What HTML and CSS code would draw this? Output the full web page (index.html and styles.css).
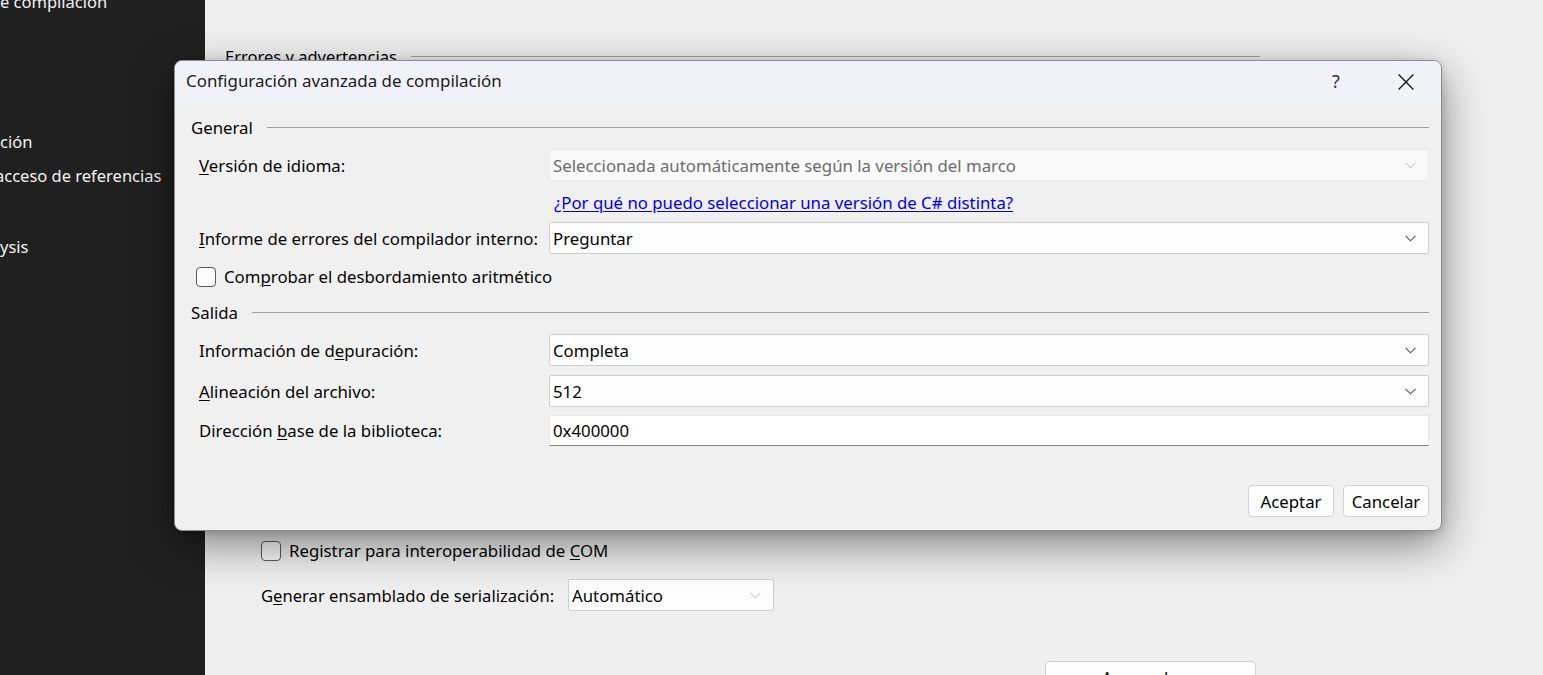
FILE: index.html
```html
<!DOCTYPE html>
<html lang="es">
<head>
<meta charset="utf-8">
<title>Configuración avanzada de compilación</title>
<link rel="stylesheet" href="styles.css">
</head>
<body>
<div class="app">
  <nav class="sidebar">
    <div class="nav-item nav-first">e compilación</div>
    <div class="nav-item nav-config">ción</div>
    <div class="nav-item nav-paths">acceso de referencias</div>
    <div class="nav-item nav-analysis">ysis</div>
  </nav>
  <main class="content">
    <div class="group-header page-group">
      <span class="group-title">Errores y advertencias</span>
      <span class="rule"></span>
    </div>
    <div class="page-rows">
      <div class="check-row page-check">
        <span class="checkbox"></span>
        <span>Registrar para interoperabilidad de <u>C</u>OM</span>
      </div>
      <div class="page-field">
        <span class="page-label">G<u>e</u>nerar ensamblado de serialización:</span>
        <div class="select page-select">
          <span>Automático</span>
          <svg class="chev light" width="11" height="7" viewBox="0 0 11 7"><polyline points="0.5,0.8 5.5,5.8 10.5,0.8" fill="none" stroke="currentColor" stroke-width="1"/></svg>
        </div>
      </div>
      <div class="page-actions">
        <button class="btn wide">Avanzadas...</button>
      </div>
    </div>
  </main>
</div>

<div class="dialog">
  <div class="titlebar">
    <span class="title">Configuración avanzada de compilación</span>
    <div class="title-controls">
      <span class="tb-btn help">?</span>
      <span class="tb-btn close">
        <svg width="16" height="16" viewBox="0 0 16 16"><path d="M0.6 0.6 L15.4 15.4 M15.4 0.6 L0.6 15.4" stroke="#1b1b1b" stroke-width="1.4" fill="none"/></svg>
      </span>
    </div>
  </div>
  <div class="dialog-body">
    <div class="group-header">
      <span class="group-title">General</span>
      <span class="rule"></span>
    </div>
    <div class="form-row row-lang">
      <span class="label"><u>V</u>ersión de idioma:</span>
      <div class="select disabled">
        <span>Seleccionada automáticamente según la versión del marco</span>
        <svg class="chev light" width="11" height="7" viewBox="0 0 11 7"><polyline points="0.5,0.8 5.5,5.8 10.5,0.8" fill="none" stroke="currentColor" stroke-width="1"/></svg>
      </div>
    </div>
    <div class="link-row">
      <a class="link" href="#">¿Por qué no puedo seleccionar una versión de C# distinta?</a>
    </div>
    <div class="form-row row-report">
      <span class="label"><u>I</u>nforme de errores del compilador interno:</span>
      <div class="select">
        <span>Preguntar</span>
        <svg class="chev" width="11" height="7" viewBox="0 0 11 7"><polyline points="0.5,0.8 5.5,5.8 10.5,0.8" fill="none" stroke="currentColor" stroke-width="1.1"/></svg>
      </div>
    </div>
    <div class="check-row dialog-check">
      <span class="checkbox"></span>
      <span>Com<u>p</u>robar el desbordamiento aritmético</span>
    </div>
    <div class="group-header group-out">
      <span class="group-title">Salida</span>
      <span class="rule"></span>
    </div>
    <div class="form-row row-debug">
      <span class="label">Información de d<u>e</u>puración:</span>
      <div class="select">
        <span>Completa</span>
        <svg class="chev" width="11" height="7" viewBox="0 0 11 7"><polyline points="0.5,0.8 5.5,5.8 10.5,0.8" fill="none" stroke="currentColor" stroke-width="1.1"/></svg>
      </div>
    </div>
    <div class="form-row row-align">
      <span class="label"><u>A</u>lineación del archivo:</span>
      <div class="select">
        <span>512</span>
        <svg class="chev" width="11" height="7" viewBox="0 0 11 7"><polyline points="0.5,0.8 5.5,5.8 10.5,0.8" fill="none" stroke="currentColor" stroke-width="1.1"/></svg>
      </div>
    </div>
    <div class="form-row row-base">
      <span class="label">Dirección <u>b</u>ase de la biblioteca:</span>
      <div class="textbox">0x400000</div>
    </div>
    <div class="dialog-actions">
      <button class="btn">Aceptar</button>
      <button class="btn">Cancelar</button>
    </div>
  </div>
</div>
</body>
</html>
```
FILE: styles.css
```css
* { box-sizing: border-box; }

html, body {
  margin: 0;
  padding: 0;
  width: 1543px;
  height: 675px;
  overflow: hidden;
}

body {
  background: #efefef;
  font-family: "Segoe UI", "Noto Sans", "Open Sans", sans-serif;
  font-size: 16.8px;
  color: #050505;
  position: relative;
}

u { text-decoration: underline; text-underline-offset: 2px; text-decoration-thickness: 1px; }

.app {
  display: flex;
  height: 675px;
}

/* Sidebar */
.sidebar {
  width: 205px;
  flex: none;
  background: #202020;
  color: #f2f2f2;
  display: flex;
  flex-direction: column;
  overflow: hidden;
  font-size: 16.5px;
}
.nav-item { line-height: 20px; white-space: nowrap; }
.nav-first { margin-top: -8px; }
.nav-config { margin-top: 120px; }
.nav-paths { margin-top: 14px; margin-left: -5px; }
.nav-analysis { margin-top: 51px; }

/* Background page */
.content {
  flex: 1;
  padding: 47px 0 0 20px;
  background: #efefef;
}

.group-header {
  display: flex;
  align-items: center;
  gap: 14px;
  line-height: 20px;
}
.group-header .rule {
  flex: 1;
  height: 1px;
  background: #a0a0a0;
  margin-top: -1px;
}
.page-group { width: 1035px; font-size: 16.5px; }

.page-rows {
  padding-left: 36px;
  display: flex;
  flex-direction: column;
}

.check-row {
  display: flex;
  align-items: center;
  gap: 8px;
  line-height: 20px;
}
.checkbox {
  width: 20px;
  height: 20px;
  border: 1px solid #5c5c5c;
  border-radius: 4px;
  background: #fbfbfb;
  flex: none;
}
.page-check { margin-top: 474px; }

.page-field {
  margin-top: 18px;
  display: flex;
  align-items: center;
}
.page-label { width: 307px; flex: none; font-size: 16.6px; }

.select {
  height: 32px;
  flex: 1;
  display: flex;
  align-items: center;
  justify-content: space-between;
  padding: 0 12px 0 3px;
  background: #fdfdfd;
  border: 1px solid #cfcfcf;
  border-radius: 2px;
  color: #050505;
}
.chev { color: #555; flex: none; }
.chev.light { color: #b4b4b4; }

.page-select { flex: none; width: 206px; height: 32px; }

.page-actions {
  margin-top: 50px;
  padding-left: 784px;
}
.btn {
  font-family: inherit;
  font-size: 16.8px;
  color: #050505;
  background: #fdfdfd;
  border: 1px solid #d2d2d2;
  border-radius: 4px;
  height: 32px;
  padding: 0;
  width: 86px;
}
.btn.wide { width: 211px; }

/* Dialog */
.dialog {
  position: absolute;
  left: 174px;
  top: 60px;
  width: 1268px;
  height: 471px;
  border: 1px solid #8c8c8c;
  border-radius: 8px;
  background: #f0f0f0;
  box-shadow: 0 14px 44px rgba(0, 0, 0, 0.46), 0 2px 8px rgba(0, 0, 0, 0.15);
  overflow: hidden;
  display: flex;
  flex-direction: column;
}

.titlebar {
  height: 42px;
  flex: none;
  background: #f1f2f7;
  display: flex;
  align-items: center;
  justify-content: space-between;
  padding: 0 0 3px 11px;
}
.title { font-size: 16.9px; color: #1b1b1b; }
.title-controls { display: flex; height: 100%; }
.tb-btn {
  width: 70px;
  height: 100%;
  display: flex;
  align-items: center;
  justify-content: center;
}
.help { font-size: 18px; color: #333; }
.close svg { display: block; margin-top: 2px; }

.dialog-body {
  flex: 1;
  display: flex;
  flex-direction: column;
  padding: 15px 12px 0 16px;
}

.form-row {
  display: flex;
  align-items: center;
  padding-left: 8px;
}
.form-row .label { width: 350px; flex: none; }

.row-lang { margin-top: 11px; }
.select.disabled {
  background: #f9f9f9;
  border-color: #e8e8e8;
  color: #6d6d6d;
}

.link-row {
  padding-left: 363px;
  line-height: 20px;
  margin-top: 12px;
}
.link { color: #0000ee; text-decoration: underline; text-underline-offset: 2px; }

.row-report { margin-top: 9px; }
.dialog-check { margin-top: 13px; padding-left: 5px; }
.group-out { margin-top: 16px; }
.row-debug { margin-top: 11px; }
.row-align { margin-top: 9px; }
.row-base { margin-top: 8px; }

.textbox {
  flex: 1;
  height: 31px;
  background: #ffffff;
  border: 1px solid #e6e6e6;
  border-bottom-color: #868686;
  padding-left: 3px;
  display: flex;
  align-items: center;
}

.dialog-actions {
  margin-top: 39px;
  display: flex;
  justify-content: flex-end;
  gap: 9px;
}
```
